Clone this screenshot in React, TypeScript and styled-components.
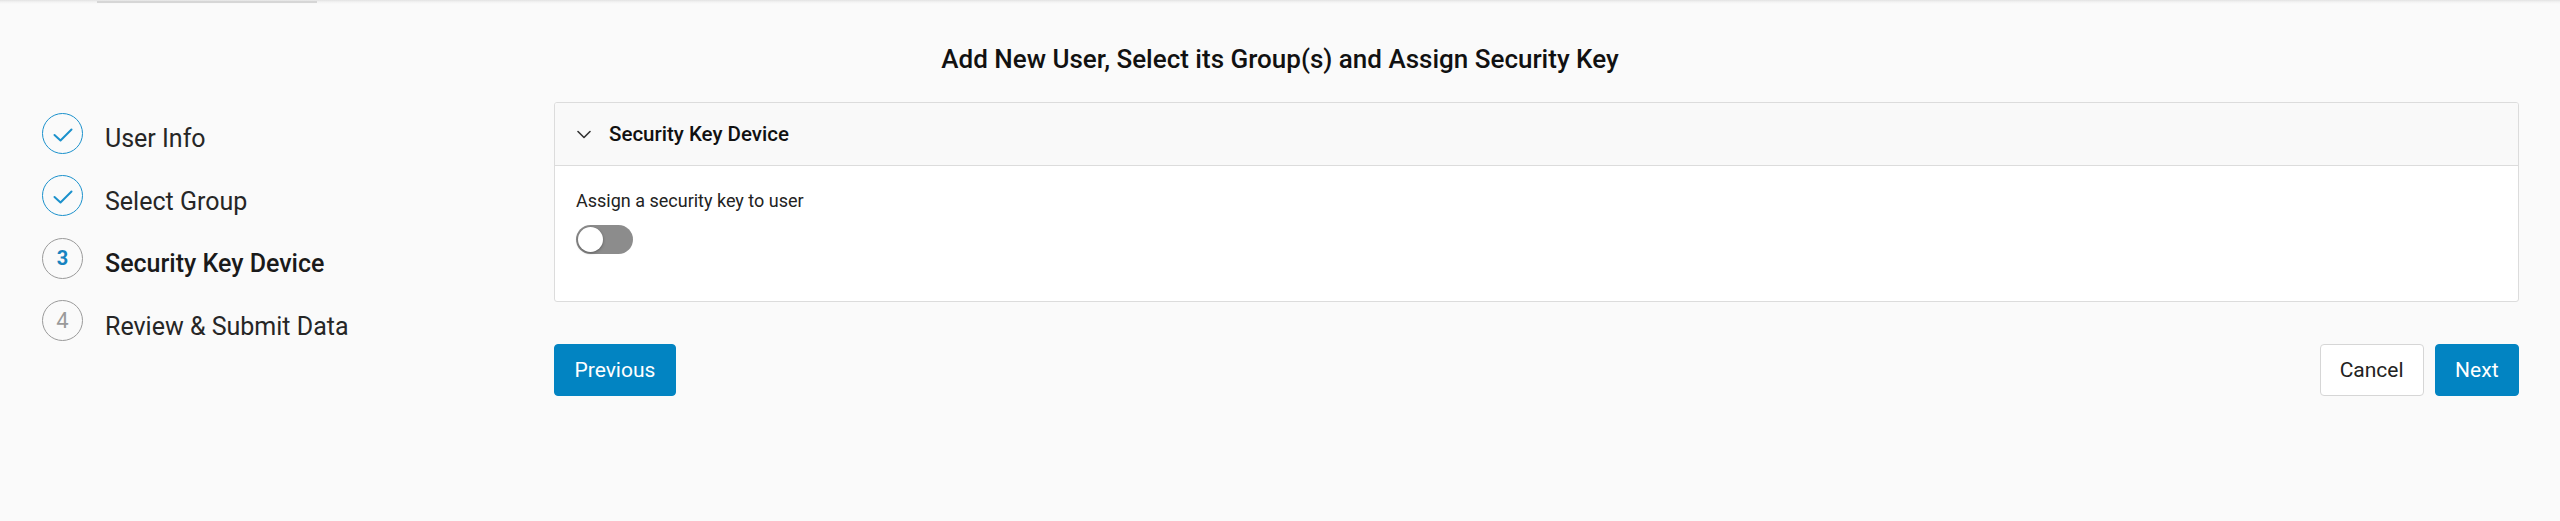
import React from "react";
import styled, { createGlobalStyle } from "styled-components";

const GlobalStyle = createGlobalStyle`
  html, body {
    margin: 0;
    padding: 0;
    background: #fafafa;
  }
  body {
    font-family: Roboto, "Liberation Sans", Arial, sans-serif;
    color: #222;
  }
  * { box-sizing: border-box; }
`;

const Page = styled.div`
  display: flex;
  flex-direction: column;
  min-height: 521px;
  background: #fafafa;
`;

const TopBar = styled.div`
  height: 4px;
  display: flex;
  padding-left: 97px;
  background: linear-gradient(#e2e2e2, #f3f3f3 50%, #fafafa);
`;

const TabMark = styled.div`
  width: 220px;
  height: 2px;
  margin-top: 1px;
  background: #d6d6d6;
`;

const Title = styled.h1`
  margin: 38px 0 0;
  font-size: 26px;
  line-height: 34px;
  font-weight: 500;
  text-align: center;
  color: #111;
`;

const Main = styled.div`
  display: flex;
  margin-top: 26px;
  padding-right: 41px;
`;

const Steps = styled.ol`
  list-style: none;
  margin: 0;
  padding: 0 0 0 42px;
  width: 554px;
  flex: none;
`;

const Step = styled.li`
  display: flex;
  align-items: center;
  height: 62.5px;
  gap: 22px;
`;

const Circle = styled.span<{ $done?: boolean; $active?: boolean }>`
  width: 41px;
  height: 41px;
  border-radius: 50%;
  flex: none;
  display: flex;
  align-items: center;
  justify-content: center;
  border: 1.5px solid ${(p) => (p.$done ? "#1b91cc" : "#9a9a9a")};
  color: ${(p) => (p.$active ? "#1783c0" : "#9a9a9a")};
  font-size: ${(p) => (p.$active ? "20px" : "22px")};
  font-weight: ${(p) => (p.$active ? 700 : 400)};
  padding-top: ${(p) => (p.$done ? "3px" : "0")};
`;

const StepLabel = styled.span<{ $active?: boolean }>`
  padding-top: 11px;
  font-size: 25px;
  font-weight: ${(p) => (p.$active ? 500 : 400)};
  color: ${(p) => (p.$active ? "#1a1a1a" : "#262626")};
`;

const Content = styled.div`
  flex: 1;
  display: flex;
  flex-direction: column;
`;

const Panel = styled.section`
  border: 1px solid #dcdcdc;
  border-radius: 3px;
  background: #fff;
  overflow: hidden;
`;

const PanelHeader = styled.div`
  height: 63px;
  display: flex;
  align-items: center;
  gap: 18px;
  padding-left: 22px;
  background: #f9f9f9;
  border-bottom: 1.5px solid #dcdcdc;
`;

const PanelTitle = styled.h2`
  margin: 0;
  font-size: 20.5px;
  font-weight: 500;
  color: #111;
`;

const PanelBody = styled.div`
  display: flex;
  flex-direction: column;
  align-items: flex-start;
  padding: 21px 21px 47px;
`;

const FieldLabel = styled.label`
  font-size: 18px;
  line-height: 27px;
  color: #222;
`;

const Toggle = styled.span`
  margin-top: 11px;
  width: 57px;
  height: 29px;
  border-radius: 15px;
  background: #8c8c8c;
  display: flex;
  align-items: center;
  padding-left: 2px;
`;

const Knob = styled.span`
  width: 25px;
  height: 25px;
  border-radius: 50%;
  background: #fff;
  box-shadow: 0 1px 3px rgba(0, 0, 0, 0.35);
`;

const Actions = styled.div`
  display: flex;
  align-items: center;
  margin-top: 42px;
  gap: 11px;
`;

const Spacer = styled.div`
  flex: 1;
`;

const Button = styled.button<{ $primary?: boolean }>`
  height: 52px;
  padding: 0 ${(p) => (p.$primary ? "19.5px" : "19px")};
  border-radius: 4px;
  font-family: Roboto, "Liberation Sans", Arial, sans-serif;
  font-size: 21px;
  cursor: pointer;
  border: 1px solid ${(p) => (p.$primary ? "#0284c2" : "#d6d6d6")};
  background: ${(p) => (p.$primary ? "#0284c2" : "#fff")};
  color: ${(p) => (p.$primary ? "#fff" : "#222")};
`;

const Check = () => (
  <svg width="20" height="14" viewBox="0 0 20 14" fill="none">
    <polyline
      points="1.5,7 7.5,12.5 18.5,1.5"
      stroke="#1b91cc"
      strokeWidth="2"
      strokeLinecap="round"
      strokeLinejoin="round"
    />
  </svg>
);

const Chevron = () => (
  <svg width="14" height="9" viewBox="0 0 14 9" fill="none">
    <polyline
      points="1,1.5 7,7.5 13,1.5"
      stroke="#333"
      strokeWidth="1.6"
      strokeLinecap="round"
      strokeLinejoin="round"
    />
  </svg>
);

const steps = [
  { label: "User Info", state: "done" },
  { label: "Select Group", state: "done" },
  { label: "Security Key Device", state: "active" },
  { label: "Review & Submit Data", state: "todo" },
];

export default function App() {
  return (
    <Page>
      <GlobalStyle />
      <TopBar>
        <TabMark />
      </TopBar>
      <Title>Add New User, Select its Group(s) and Assign Security Key</Title>
      <Main>
        <Steps>
          {steps.map((s, i) => (
            <Step key={s.label}>
              <Circle $done={s.state === "done"} $active={s.state === "active"}>
                {s.state === "done" ? <Check /> : i + 1}
              </Circle>
              <StepLabel $active={s.state === "active"}>{s.label}</StepLabel>
            </Step>
          ))}
        </Steps>
        <Content>
          <Panel>
            <PanelHeader>
              <Chevron />
              <PanelTitle>Security Key Device</PanelTitle>
            </PanelHeader>
            <PanelBody>
              <FieldLabel>Assign a security key to user</FieldLabel>
              <Toggle role="switch" aria-checked="false">
                <Knob />
              </Toggle>
            </PanelBody>
          </Panel>
          <Actions>
            <Button $primary>Previous</Button>
            <Spacer />
            <Button>Cancel</Button>
            <Button $primary>Next</Button>
          </Actions>
        </Content>
      </Main>
    </Page>
  );
}
